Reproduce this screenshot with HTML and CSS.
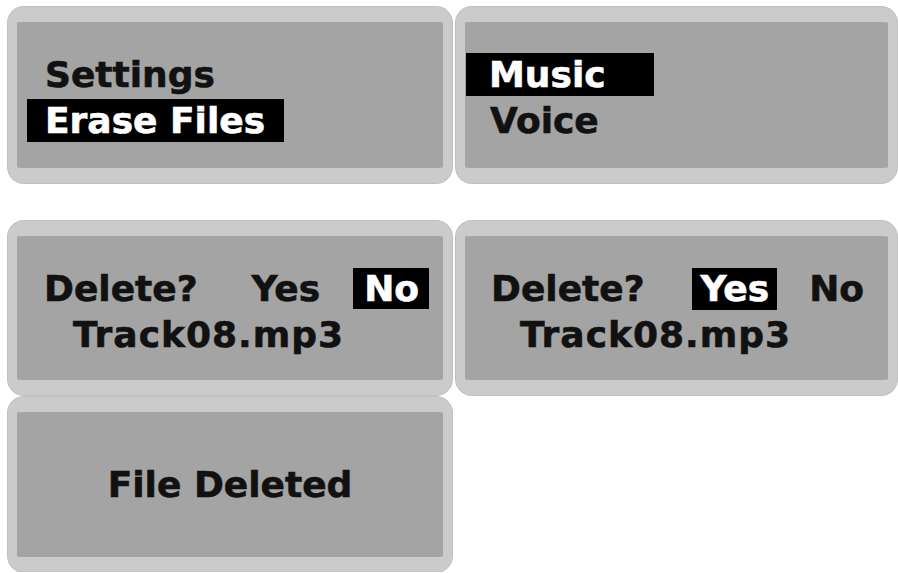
FILE: index.html
```html
<!DOCTYPE html>
<html lang="en">
<head>
    <meta charset="UTF-8">
    <meta name="viewport" content="width=device-width, initial-scale=1.0">
    <title>Erase Files</title>
    <link rel="stylesheet" href="styles.css">
</head>
<body>
    <div class="screens">
        <!-- menu: settings / erase files -->
        <div class="lcd top">
            <div class="lines menu-left">
                <div class="line">Settings</div>
                <div class="line"><span class="sel sel-erase">Erase Files</span></div>
            </div>
        </div>

        <!-- submenu: music / voice -->
        <div class="lcd top">
            <div class="lines menu-right">
                <div class="line"><span class="sel sel-music">Music</span></div>
                <div class="line">Voice</div>
            </div>
        </div>

        <!-- confirm, "No" selected -->
        <div class="lcd">
            <div class="lines confirm-left">
                <div class="line">Delete?<span class="yes-a">Yes</span><span class="sel no-a">No</span></div>
                <div class="line track">Track08.mp3</div>
            </div>
        </div>

        <!-- confirm, "Yes" selected -->
        <div class="lcd">
            <div class="lines confirm-right">
                <div class="line">Delete?<span class="sel yes-b">Yes</span><span class="no-b">No</span></div>
                <div class="line track">Track08.mp3</div>
            </div>
        </div>

        <!-- done -->
        <div class="lcd done">
            <div class="line">File Deleted</div>
        </div>
    </div>
</body>
</html>
```

FILE: styles.css
```css
body {
    margin: 0;
    background: #fff;
    font-family: 'DejaVu Sans', Verdana, sans-serif;
    font-weight: bold;
    font-size: 36px;
    color: #111;
}
.screens {
    display: grid;
    grid-template-columns: 444px 441px;
    grid-template-rows: 212px 174px 175px;
    column-gap: 4px;
    row-gap: 2px;
    padding: 7px 0 0 8px;
}
.lcd {
    box-sizing: border-box;
    background: #a4a4a4;
    border-style: solid;
    border-color: #cbcbcb;
    border-width: 15px 9px;
    border-radius: 16px;
    box-shadow: 0 0 0 1px #c0c0c0;
}
.lcd.top {
    margin-bottom: 36px;
}
.lines {
    padding-top: 30px;
}
.line {
    height: 46px;
    line-height: 46px;
    white-space: nowrap;
    -webkit-text-stroke: 0.6px currentColor;
}
.sel {
    display: inline-block;
    line-height: 43px;
    background: #000;
    color: #fff;
}
.menu-left {
    padding-left: 28px;
}
.sel-erase {
    margin-left: -18px;
    padding: 0 19px 0 18px;
}
.menu-right {
    padding-left: 25px;
}
.sel-music {
    margin-left: -24px;
    padding: 0 48px 0 23px;
}
.confirm-left {
    padding-left: 27px;
}
.yes-a {
    margin-left: 54px;
}
.no-a {
    margin-left: 33px;
    padding: 0 10px 0 11px;
    line-height: 41px;
}
.confirm-right {
    padding-left: 26px;
}
.yes-b {
    margin-left: 47px;
    padding: 0 8px 0 9px;
    line-height: 42px;
}
.no-b {
    margin-left: 32px;
}
.track {
    padding-left: 29px;
    letter-spacing: 1px;
}
.done {
    display: flex;
    justify-content: center;
    align-items: center;
}
```
